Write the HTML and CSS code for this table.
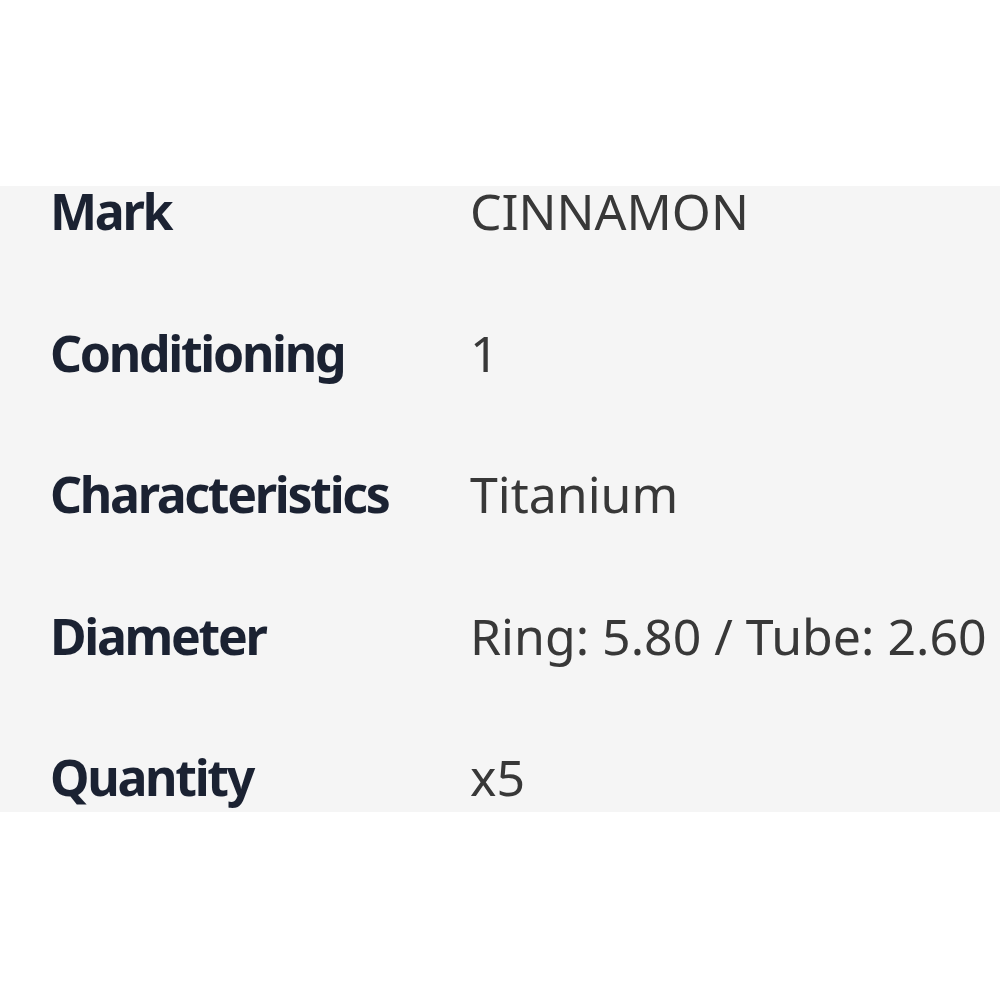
FILE: index.html
```html
<!DOCTYPE html>
<html>
<head>
<meta charset="utf-8">
<link rel="stylesheet" href="styles.css">
</head>
<body>
<div class="spacer"></div>
<div class="specs">
  <div class="row"><div class="label">Mark</div><div class="value">CINNAMON</div></div>
  <div class="row"><div class="label">Conditioning</div><div class="value">1</div></div>
  <div class="row"><div class="label">Characteristics</div><div class="value">Titanium</div></div>
  <div class="row"><div class="label">Diameter</div><div class="value">Ring: 5.80 / Tube: 2.60</div></div>
  <div class="row"><div class="label">Quantity</div><div class="value">x5</div></div>
</div>
</body>
</html>
```
FILE: styles.css
```css
html, body {
  margin: 0;
  padding: 0;
  background: #ffffff;
}
.spacer {
  height: 186px;
}
.specs {
  background: #f5f5f5;
  height: 626px;
  display: flex;
  flex-direction: column;
  gap: 91.5px;
  padding-left: 50px;
  box-sizing: border-box;
  font-family: "Noto Sans", "Open Sans", sans-serif;
  font-size: 50px;
}
.row {
  display: grid;
  grid-template-columns: 420px auto;
  line-height: 50px;
  white-space: nowrap;
}
.label {
  font-weight: 700;
  color: #1b2232;
  letter-spacing: -2.3px;
}
.value {
  color: #383838;
}
```
